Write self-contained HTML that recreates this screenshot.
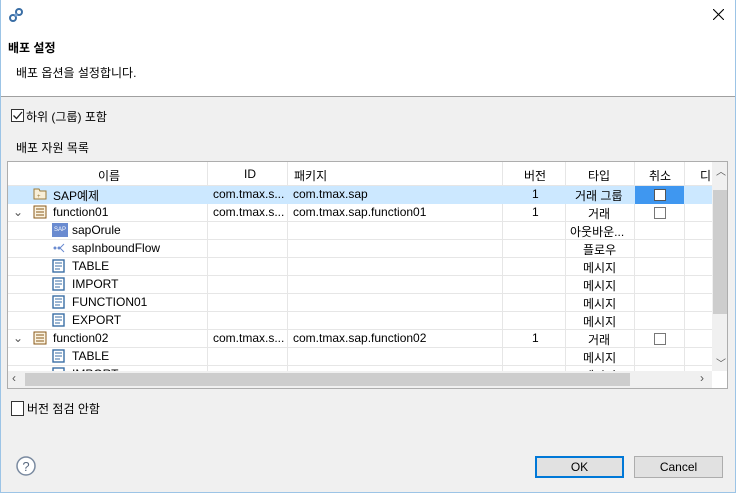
<!DOCTYPE html>
<html><head><meta charset="utf-8"><style>
*{margin:0;padding:0;box-sizing:border-box}
body{width:736px;height:493px;overflow:hidden;background:#f0f0f0;font-family:"Liberation Sans","Noto Sans CJK KR",sans-serif;font-size:12px;color:#000;position:relative}
.a{position:absolute;white-space:nowrap}
#top{position:absolute;left:0;top:0;width:736px;height:97px;background:#fff;border-bottom:1px solid #a0a0a0}
#frame{position:absolute;left:0;top:0;width:736px;height:493px;border:1px solid #9cc4e6;border-top:none;pointer-events:none}
#tbl{position:absolute;left:7px;top:161px;width:721px;height:228px;background:#fff;border:1px solid #adadad;overflow:hidden}
.row{position:absolute;left:0;height:18px;width:704px;border-bottom:1px solid #e6e6e6}
.vl{position:absolute;top:0;width:1px;height:210px;background:#e6e6e6}
.c{position:absolute;top:2px;white-space:nowrap}
.cb{position:absolute;width:12px;height:12px;border:1px solid #555;background:#fff}
.btn{position:absolute;top:456px;height:22px;background:#e1e1e1;border:1px solid #adadad;text-align:center;line-height:20px}
</style></head><body>
<div id="top"></div>
<svg class="a" style="left:8px;top:7px" width="16" height="16" viewBox="0 0 16 16"><circle cx="5" cy="11" r="3" fill="none" stroke="#3a6ea5" stroke-width="2"/><circle cx="11" cy="5" r="3" fill="none" stroke="#3a6ea5" stroke-width="2"/><circle cx="8" cy="8" r="1.5" fill="#7fa7d6"/></svg>
<svg class="a" style="left:713px;top:9px" width="11" height="11"><path d="M0 0L11 11M11 0L0 11" stroke="#000" stroke-width="1.1"/></svg>
<div class="a" style="left:8px;top:39px;font-weight:bold">배포 설정</div>
<div class="a" style="left:16px;top:64px">배포 옵션을 설정합니다.</div>

<div class="cb" style="left:11px;top:109px;width:13px;height:13px;border-color:#333"></div>
<svg class="a" style="left:12px;top:110px" width="11" height="11"><path d="M1.5 5.5L4.5 8.5L10 2" stroke="#222" fill="none" stroke-width="1.3"/></svg>
<div class="a" style="left:26px;top:108px">하위 (그룹) 포함</div>
<div class="a" style="left:16px;top:139px">배포 자원 목록</div>

<div id="tbl">
 <div class="row" style="top:0;height:24px;border-bottom:1px solid #e6e6e6">
  <div class="c" style="left:90px;top:5px">이름</div><div class="c" style="left:236px;top:5px">ID</div><div class="c" style="left:286px;top:5px">패키지</div><div class="c" style="left:516px;top:5px">버전</div><div class="c" style="left:580px;top:5px">타입</div><div class="c" style="left:641px;top:5px">취소</div><div class="c" style="left:692px;top:5px">디</div>
 </div>
 <div class="vl" style="left:199px"></div><div class="vl" style="left:279px"></div><div class="vl" style="left:494px"></div><div class="vl" style="left:557px"></div><div class="vl" style="left:626px"></div><div class="vl" style="left:676px"></div>
 <div class="row" style="top:24px;background:#cce8ff;border-color:#cce8ff"><div style="position:absolute;left:627px;top:0;width:49px;height:18px;background:#3f97f0"></div></div>
 <div class="row" style="top:42px"></div><div class="row" style="top:60px"></div><div class="row" style="top:78px"></div><div class="row" style="top:96px"></div><div class="row" style="top:114px"></div><div class="row" style="top:132px"></div><div class="row" style="top:150px"></div><div class="row" style="top:168px"></div><div class="row" style="top:186px"></div>
 <div style="position:absolute;left:704px;top:0;width:17px;height:209px;background:#f0f0f0"></div>
 <div style="position:absolute;left:705px;top:28px;width:15px;height:124px;background:#cdcdcd"></div>
 <div class="a" style="left:708px;top:1px;color:#555;font-size:10px">︿</div><div class="a" style="left:708px;top:193px;color:#555;font-size:10px">﹀</div>
</div>
<div style="position:absolute;left:8px;top:162px;width:704px;height:209px;overflow:hidden">
 <svg class="a" style="left:25px;top:24px" width="14" height="14"><path d="M1 3h5l1 2h6v8H1z" fill="#f8efd8" stroke="#9a7a3a"/><text x="4" y="12" font-size="6" fill="#9a7a3a">+</text></svg>
 <div class="a" style="left:45px;top:25px">SAP예제</div><div class="a" style="left:205px;top:25px">com.tmax.s...</div><div class="a" style="left:285px;top:25px">com.tmax.sap</div><div class="a" style="left:524px;top:25px">1</div><div class="a" style="left:567px;top:25px">거래 그룹</div>
 <div class="cb" style="left:646px;top:27px"></div>
 <div class="a" style="left:5px;top:43px;color:#555">⌄</div>
 <svg class="a" style="left:25px;top:43px" width="14" height="14"><rect x="1" y="1" width="12" height="12" fill="#fbf3e0" stroke="#8a5a1a"/><path d="M3 4h8M3 7h8M3 10h8" stroke="#8a5a1a"/></svg>
 <div class="a" style="left:45px;top:43px">function01</div><div class="a" style="left:205px;top:43px">com.tmax.s...</div><div class="a" style="left:285px;top:43px">com.tmax.sap.function01</div><div class="a" style="left:524px;top:43px">1</div><div class="a" style="left:580px;top:43px">거래</div>
 <div class="cb" style="left:646px;top:45px;border-color:#777"></div>
 <div class="a" style="left:44px;top:61px;width:16px;height:14px;background:#6a8bd0;color:#fff;font-size:6px;line-height:14px;text-align:center">SAP</div>
 <div class="a" style="left:64px;top:61px">sapOrule</div><div class="a" style="left:562px;top:61px">아웃바운...</div>
 <svg class="a" style="left:44px;top:79px" width="14" height="14"><circle cx="3" cy="7" r="1.5" fill="#6a8bd0"/><circle cx="7" cy="7" r="1.5" fill="#6a8bd0"/><path d="M8 7l4-4M8 7l4 4" stroke="#6a8bd0"/></svg>
 <div class="a" style="left:64px;top:79px">sapInboundFlow</div><div class="a" style="left:575px;top:79px">플로우</div>
 <div class="a" style="left:5px;top:169px;color:#555">⌄</div>
 <svg class="a" style="left:25px;top:169px" width="14" height="14"><rect x="1" y="1" width="12" height="12" fill="#fbf3e0" stroke="#8a5a1a"/><path d="M3 4h8M3 7h8M3 10h8" stroke="#8a5a1a"/></svg>
 <div class="a" style="left:45px;top:169px">function02</div><div class="a" style="left:205px;top:169px">com.tmax.s...</div><div class="a" style="left:285px;top:169px">com.tmax.sap.function02</div><div class="a" style="left:524px;top:169px">1</div><div class="a" style="left:580px;top:169px">거래</div>
 <div class="cb" style="left:646px;top:171px;border-color:#777"></div>
 <svg class="a" style="left:44px;top:97px" width="14" height="14"><rect x="1" y="1" width="11" height="12" fill="#fff" stroke="#3a6ea5" stroke-width="1.4"/><path d="M3 4h7M3 7h7M3 10h5" stroke="#3a6ea5"/></svg><div class="a" style="left:64px;top:97px">TABLE</div><div class="a" style="left:575px;top:97px">메시지</div>
 <svg class="a" style="left:44px;top:115px" width="14" height="14"><rect x="1" y="1" width="11" height="12" fill="#fff" stroke="#3a6ea5" stroke-width="1.4"/><path d="M3 4h7M3 7h7M3 10h5" stroke="#3a6ea5"/></svg><div class="a" style="left:64px;top:115px">IMPORT</div><div class="a" style="left:575px;top:115px">메시지</div>
 <svg class="a" style="left:44px;top:133px" width="14" height="14"><rect x="1" y="1" width="11" height="12" fill="#fff" stroke="#3a6ea5" stroke-width="1.4"/><path d="M3 4h7M3 7h7M3 10h5" stroke="#3a6ea5"/></svg><div class="a" style="left:64px;top:133px">FUNCTION01</div><div class="a" style="left:575px;top:133px">메시지</div>
 <svg class="a" style="left:44px;top:151px" width="14" height="14"><rect x="1" y="1" width="11" height="12" fill="#fff" stroke="#3a6ea5" stroke-width="1.4"/><path d="M3 4h7M3 7h7M3 10h5" stroke="#3a6ea5"/></svg><div class="a" style="left:64px;top:151px">EXPORT</div><div class="a" style="left:575px;top:151px">메시지</div>
 <svg class="a" style="left:44px;top:187px" width="14" height="14"><rect x="1" y="1" width="11" height="12" fill="#fff" stroke="#3a6ea5" stroke-width="1.4"/><path d="M3 4h7M3 7h7M3 10h5" stroke="#3a6ea5"/></svg><div class="a" style="left:64px;top:187px">TABLE</div><div class="a" style="left:575px;top:187px">메시지</div>
 <svg class="a" style="left:44px;top:205px" width="14" height="14"><rect x="1" y="1" width="11" height="12" fill="#fff" stroke="#3a6ea5" stroke-width="1.4"/></svg><div class="a" style="left:64px;top:205px">IMPORT</div><div class="a" style="left:575px;top:205px">메시지</div>
</div>
<div style="position:absolute;left:8px;top:371px;width:704px;height:17px;background:#f0f0f0"></div>
<div style="position:absolute;left:25px;top:373px;width:605px;height:13px;background:#cdcdcd"></div>
<div class="a" style="left:12px;top:371px;color:#555">‹</div><div class="a" style="left:700px;top:371px;color:#555">›</div>

<div class="cb" style="left:11px;top:401px;width:13px;height:15px;border-color:#333"></div>
<div class="a" style="left:27px;top:400px">버전 점검 안함</div>
<svg class="a" style="left:16px;top:456px" width="20" height="20"><circle cx="10" cy="10" r="9" fill="#fff" stroke="#7a8aa0" stroke-width="1.5"/><text x="10" y="15" font-size="13" text-anchor="middle" fill="#5a6a80" font-family="Liberation Sans">?</text></svg>
<div class="btn" style="left:535px;width:89px;border:2px solid #0078d7;line-height:18px">OK</div>
<div class="btn" style="left:634px;width:89px">Cancel</div>
<div id="frame"></div>
</body></html>
